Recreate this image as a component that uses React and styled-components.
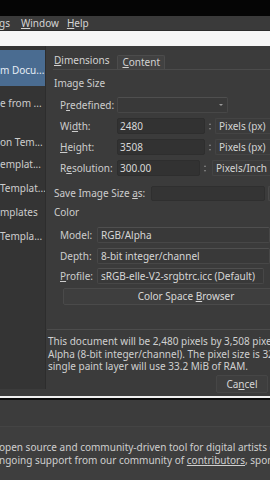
import React from 'react';
import styled, { createGlobalStyle } from 'styled-components';

const GlobalStyle = createGlobalStyle`
  html, body {
    margin: 0;
    padding: 0;
    background: #000;
  }
  body {
    font-family: "Noto Sans", "DejaVu Sans", sans-serif;
    font-size: 10px;
    color: #cdcdcd;
  }
`;

const Screen = styled.div`
  width: 270px;
  height: 480px;
  overflow: hidden;
  display: flex;
  flex-direction: column;
  background: #000;
`;

const TopBlack = styled.div`
  height: 16px;
  flex: none;
  background: #050505;
`;

const MenuBar = styled.div`
  height: 14px;
  flex: none;
  display: flex;
  align-items: center;
  white-space: nowrap;
  background: #3a3a3a;
  border-bottom: 1px solid #2b2b2b;
`;

const MenuItem = styled.span`
  margin-left: ${p => p.$ml}px;
  color: #d4d4d4;
  line-height: 14px;
`;

const U = styled.span`
  text-decoration: underline;
  text-underline-offset: 1px;
`;

const WhiteStrip = styled.div`
  height: 15px;
  flex: none;
  background: #f6f6f6;
`;

const Dialog = styled.div`
  height: 350px;
  flex: none;
  display: flex;
  background: #3b3b3b;
`;

const Sidebar = styled.div`
  width: 46px;
  height: 343px;
  flex: none;
  box-sizing: border-box;
  padding-top: 4px;
  overflow: hidden;
  background: #343434;
  border-right: 1px solid #2d2d2d;
`;

const SideItem = styled.div`
  height: ${p => (p.$active ? 36 : 22)}px;
  margin-top: ${p => p.$mt || 0}px;
  padding-top: ${p => (p.$active ? 4 : 0)}px;
  box-sizing: border-box;
  display: flex;
  align-items: center;
  white-space: nowrap;
  background: ${p => (p.$active ? '#4a6c91' : 'transparent')};
  color: ${p => (p.$active ? '#e6edf5' : '#cdcdcd')};
`;

const Main = styled.div`
  flex: 1;
  min-width: 0;
  display: flex;
  flex-direction: column;
  padding: 8px 0 0 7px;
  overflow: hidden;
`;

const Tabs = styled.div`
  height: 15px;
  flex: none;
  display: flex;
  align-items: flex-end;
  border-bottom: 1px solid #4b4b4b;
  margin-right: -10px;
`;

const Tab = styled.div`
  height: ${p => (p.$active ? 15 : 14)}px;
  line-height: 13px;
  padding: 0 ${p => (p.$active ? 2 : 4)}px 0 ${p => (p.$active ? 1 : 4)}px;
  margin-left: ${p => p.$ml || 0}px;
  box-sizing: border-box;
  background: ${p => (p.$active ? 'transparent' : '#414141')};
  border: ${p => (p.$active ? 'none' : '1px solid #4c4c4c')};
  border-bottom: none;
  border-radius: 2px 2px 0 0;
  color: #d2d2d2;
`;

const Heading = styled.div`
  margin-top: ${p => p.$mt}px;
  margin-left: 1px;
  height: 13px;
  line-height: 13px;
  white-space: nowrap;
`;

const FormGrid = styled.div`
  margin-top: ${p => p.$mt}px;
  display: grid;
  grid-template-columns: ${p => p.$label}px 1fr;
  grid-auto-rows: 16px;
  row-gap: ${p => p.$gap}px;
`;

const Label = styled.div`
  padding-left: 7px;
  line-height: 16px;
  white-space: nowrap;
`;

const Cell = styled.div`
  display: flex;
  align-items: stretch;
  min-width: 0;
`;

const Combo = styled.div`
  width: ${p => (p.$w ? `${p.$w}px` : 'auto')};
  flex: ${p => (p.$w ? 'none' : 1)};
  margin-right: ${p => p.$mr || 0}px;
  box-sizing: border-box;
  padding-left: 3px;
  line-height: 14px;
  background: #393939;
  border: 1px solid #474747;
  border-top-color: #4f4f4f;
  border-radius: 2px;
  white-space: nowrap;
  overflow: hidden;
  color: #d6d6d6;
  position: relative;
`;

const ComboArrow = styled.span`
  position: absolute;
  right: 4px;
  top: 6px;
  width: 0;
  height: 0;
  border-left: 2px solid transparent;
  border-right: 2px solid transparent;
  border-top: 2px solid #9a9a9a;
`;

const NumField = styled.div`
  width: ${p => p.$w}px;
  flex: none;
  box-sizing: border-box;
  padding-left: 2px;
  line-height: 14px;
  background: #323232;
  border: 1px solid #2e2e2e;
  border-radius: 2px;
  color: #d8d8d8;
`;

const Spin = styled.div`
  width: 10px;
  flex: none;
  display: flex;
  flex-direction: column;
  align-items: center;
  justify-content: center;
  gap: 3px;
`;

const SpinArrow = styled.span`
  width: 0;
  height: 0;
  border-left: 1.5px solid transparent;
  border-right: 1.5px solid transparent;
  ${p => (p.$up ? 'border-bottom: 2px solid #8a8a8a;' : 'border-top: 2px solid #8a8a8a;')}
`;

const Unit = styled.div`
  flex: 1;
  margin-left: ${p => p.$ml}px;
  box-sizing: border-box;
  padding-left: 3px;
  line-height: 14px;
  border: 1px solid #444;
  border-right: none;
  border-radius: 2px 0 0 2px;
  white-space: nowrap;
  color: #d4d4d4;
`;

const SaveRow = styled.div`
  margin-top: 10px;
  height: 15px;
  display: flex;
  align-items: stretch;
  white-space: nowrap;
`;

const SaveLabel = styled.div`
  width: 97px;
  flex: none;
  padding-left: 1px;
  line-height: 15px;
`;

const SaveField = styled.div`
  width: 112px;
  flex: none;
  background: #343434;
  border: 1px solid #2f2f2f;
  border-radius: 2px;
`;

const SaveButton = styled.div`
  width: 12px;
  flex: none;
  margin-left: 3px;
  border: 1px solid #4a4a4a;
  border-right: none;
  background: #3f3f3f;
  border-radius: 2px 0 0 2px;
`;

const WideButton = styled.div`
  margin: 4px -39px 0 10px;
  height: 17px;
  box-sizing: border-box;
  line-height: 15px;
  text-align: center;
  background: #3e3e3e;
  border: 1px solid #4a4a4a;
  border-radius: 2px;
  color: #d8d8d8;
  white-space: nowrap;
`;

const Separator = styled.div`
  margin: 24px 0 0 -6px;
  height: 1px;
  background: #4c4c4c;
`;

const InfoText = styled.div`
  margin: 5px 0 0 -5px;
  line-height: 12.5px;
  white-space: nowrap;
  color: #d0d0d0;
`;

const ButtonRow = styled.div`
  margin-top: 2px;
  display: flex;
  justify-content: flex-end;
`;

const DialogButton = styled.div`
  width: 52px;
  height: 18px;
  margin-right: 2px;
  box-sizing: border-box;
  line-height: 16px;
  text-align: center;
  background: #3e3e3e;
  border: 1px solid #464646;
  border-radius: 2px;
  color: #d6d6d6;
`;

const WhiteLine = styled.div`
  height: 2px;
  flex: none;
  background: #f0f0f0;
`;

const BlackLine = styled.div`
  height: 2px;
  flex: none;
  background: #0a0a0a;
`;

const Footer = styled.div`
  flex: 1;
  display: flex;
  flex-direction: column;
  background: #3e3e3e;
`;

const FooterBand = styled.div`
  height: 26px;
  flex: none;
  background: #3c3c3c;
  border-bottom: 1px solid #444;
`;

const FooterText = styled.div`
  margin: 14px 0 0 -1px;
  line-height: 12.5px;
  white-space: nowrap;
  color: #cfcfcf;
`;

const sideItems = [
  { text: 'm Docu...', active: true },
  { text: 'e from ...', mt: 6 },
  { text: 'on Tem...', mt: 17 },
  { text: 'emplat...', mt: 0 },
  { text: 'Templat...', mt: 2 },
  { text: 'mplates', mt: 2 },
  { text: 'Templa...', mt: 2 },
];

const SpinBox = () => (
  <Spin>
    <SpinArrow $up />
    <SpinArrow />
  </Spin>
);

export default function App() {
  return (
    <>
      <GlobalStyle />
      <Screen>
        <TopBlack />
        <MenuBar>
          <MenuItem $ml={-1}>gs</MenuItem>
          <MenuItem $ml={11}><U>W</U>indow</MenuItem>
          <MenuItem $ml={8}><U>H</U>elp</MenuItem>
        </MenuBar>
        <WhiteStrip />
        <Dialog>
          <Sidebar>
            {sideItems.map((item, i) => (
              <SideItem key={i} $active={item.active} $mt={item.mt}>{item.text}</SideItem>
            ))}
          </Sidebar>
          <Main>
            <Tabs>
              <Tab $active><U>D</U>imensions</Tab>
              <Tab $ml={6}><U>C</U>ontent</Tab>
            </Tabs>

            <Heading $mt={7}>Image Size</Heading>
            <FormGrid $mt={7} $label={64} $gap={5}>
              <Label>P<U>r</U>edefined:</Label>
              <Cell>
                <Combo $w={111}><ComboArrow /></Combo>
              </Cell>
              <Label>Wi<U>d</U>th:</Label>
              <Cell>
                <NumField $w={88}>2480</NumField>
                <SpinBox />
                <Unit $ml={0}>Pixels (px)</Unit>
              </Cell>
              <Label><U>H</U>eight:</Label>
              <Cell>
                <NumField $w={88}>3508</NumField>
                <SpinBox />
                <Unit $ml={0}>Pixels (px)</Unit>
              </Cell>
              <Label>R<U>e</U>solution:</Label>
              <Cell>
                <NumField $w={83}>300.00</NumField>
                <SpinBox />
                <Unit $ml={2}>Pixels/Inch</Unit>
              </Cell>
            </FormGrid>

            <SaveRow>
              <SaveLabel>Save Image Size <U>a</U>s:</SaveLabel>
              <SaveField />
              <SaveButton />
            </SaveRow>

            <Heading $mt={5}>Color</Heading>
            <FormGrid $mt={8} $label={44} $gap={4.5}>
              <Label>Model:</Label>
              <Cell><Combo>RGB/Alpha</Combo></Cell>
              <Label>Depth:</Label>
              <Cell><Combo>8-bit integer/channel</Combo></Cell>
              <Label><U>P</U>rofile:</Label>
              <Cell><Combo $mr={6}>sRGB-elle-V2-srgbtrc.icc (Default)</Combo></Cell>
            </FormGrid>

            <WideButton>Color Space <U>B</U>rowser</WideButton>

            <Separator />
            <InfoText>
              <div>This document will be 2,480 pixels by 3,508 pixels in RGB/</div>
              <div>Alpha (8-bit integer/channel). The pixel size is 32 bit. A</div>
              <div>single paint layer will use 33.2 MiB of RAM.</div>
            </InfoText>
            <ButtonRow>
              <DialogButton>Ca<U>n</U>cel</DialogButton>
            </ButtonRow>
          </Main>
        </Dialog>
        <WhiteLine />
        <BlackLine />
        <Footer>
          <FooterBand />
          <FooterText>
            <div>open source and community-driven tool for digital artists everywhere.</div>
            <div>ngoing support from our community of <U>contributors</U>, sponsors and donors.</div>
          </FooterText>
        </Footer>
      </Screen>
    </>
  );
}
